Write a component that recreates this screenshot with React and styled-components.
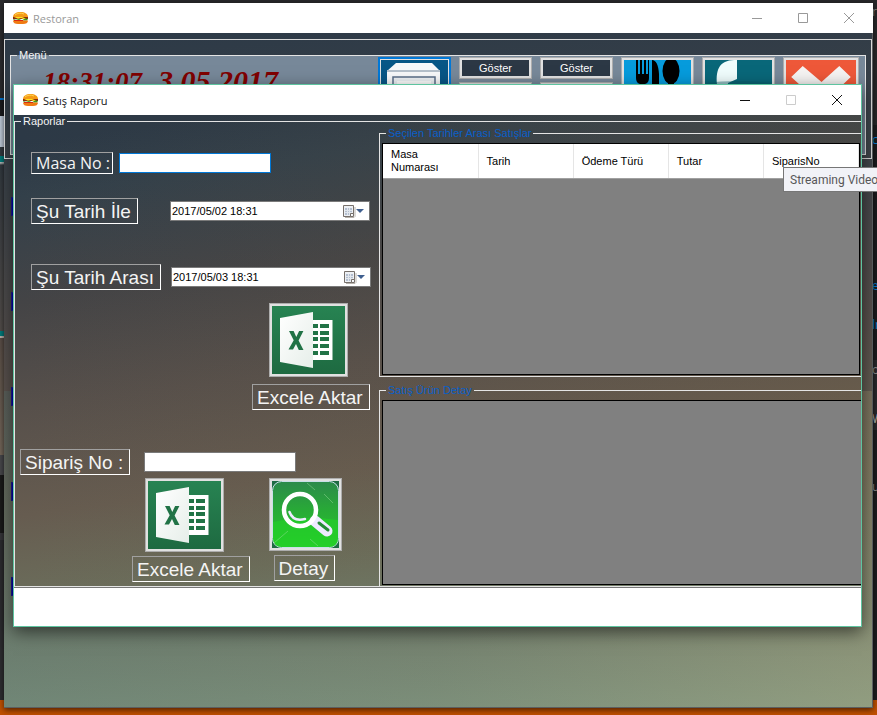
import React from "react";
import styled, { createGlobalStyle, css } from "styled-components";

const Global = createGlobalStyle`
  * { box-sizing: border-box; }
  html, body { margin: 0; padding: 0; }
  body { overflow: hidden; font-family: "Liberation Sans", Arial, sans-serif; font-size: 11px; }
  button, input { font: inherit; }
`;

const uiFont = css`font-family: "Open Sans", "Noto Sans", sans-serif;`;

const Desktop = styled.div`
  position: relative;
  display: grid;
  grid-template-columns: 4px 1fr 5px;
  grid-template-rows: 1fr 15px;
  min-height: 100vh;
  overflow: hidden;
  background: #28282a;
`;

const LeftStrip = styled.div`
  background: linear-gradient(
    #2b2b2d 0 98px, #0078d7 98px 100px, #1c1c1e 100px 116px, #c5d0df 116px 147px,
    #343b42 147px 156px, #008080 156px 162px, #b8bcbc 162px 163px, #343b42 165px,
    #55504d 331px, #008080 331px 336px, #c0b8b0 336px 338px, #5c5049 338px, #776a5c 455px,
    #4a4a4e 455px 475px, #1c1c1c 475px 533px, #38383c 533px 540px, #2d2d30 540px
  );
`;

const RightStrip = styled.div`
  grid-column: 3;
  overflow: hidden;
  background: linear-gradient(#28282a 0 125px, #1c1c1e 125px 360px, #2b2b2e 360px 430px, #1d1d1f 430px);
`;

const StripText = styled.span`
  ${uiFont}
  display: block;
  height: ${(p) => p.$height}px;
  padding-top: 4px;
  font-size: 12px;
  line-height: 16px;
  color: ${(p) => p.$color};
`;

const Taskbar = styled.div`
  grid-column: 1 / -1;
  background: #c05000;
`;

const Window = styled.section`
  position: absolute;
  display: flex;
  flex-direction: column;
`;

const MainWindow = styled(Window)`
  inset: 3px 4px 7px 4px;
  box-shadow: 0 2px 6px rgba(0, 0, 0, 0.6);
  background:
    linear-gradient(90deg, rgba(85, 130, 125, 0.25), rgba(110, 140, 120, 0.1) 50%, rgba(190, 180, 130, 0.25)) bottom / 100% 45% no-repeat,
    linear-gradient(176deg, #2d3a47 5%, #3c4248 25%, #58504c 50%, #6a6555 68%, #747e6c 86%, #829680);
`;

const Dialog = styled(Window)`
  inset: 84px 15px 88px 13px;
  border: 1px solid #5ec4a0;
  background: #fff;
  box-shadow: 0 5px 16px rgba(0, 0, 0, 0.55);
`;

const TitleBar = styled.header`
  ${uiFont}
  display: flex;
  flex: none;
  align-items: center;
  height: 30px;
  padding: 0 17px 0 9px;
  gap: 5px;
  background: #fff;
  color: ${(p) => (p.$active ? "#111" : "#999")};
  font-size: 11px;
`;

const Title = styled.h1`
  flex: 1;
  margin: 0;
  font-size: 11px;
  font-weight: 400;
`;

const Controls = styled.div`
  display: flex;
  gap: 33px;
`;

const ControlButton = styled.button`
  display: flex;
  width: 13px;
  height: 13px;
  padding: 0;
  border: 0;
  background: none;
  color: ${(p) => p.$color};
`;

const MainBody = styled.div`
  display: flex;
  flex: 1;
  flex-direction: column;
  padding-top: 6px;
  border: solid #5c5f61;
  border-width: 0 1px 1px 0;
`;

const MenuFrame = styled.div`
  padding: 9px 5px 3px;
  border: 1px solid #d8d8d8;
`;

const Group = styled.fieldset`
  display: flex;
  min-width: 0;
  margin: 0;
  padding: 0;
  border: 1px solid #e4e4e4;
`;

const MenuGroup = styled(Group)`
  height: 106px;
  background: #778899;
`;

const Legend = styled.legend`
  margin-left: ${(p) => p.$indent}px;
  padding: 0 2px;
  line-height: ${(p) => p.$line}px;
  color: ${(p) => p.$color || "#f4f4f4"};
`;

const Clock = styled.div`
  display: flex;
  flex: 1;
  align-items: baseline;
  gap: 16px;
  padding: 4px 0 0 32px;
  font: italic bold 27px/30px "Liberation Serif", "Times New Roman", serif;
  color: #800000;
  white-space: nowrap;
`;

const DateText = styled.span`
  font-size: 30px;
`;

const Tools = styled.div`
  display: grid;
  grid-template-columns: repeat(5, 73px) 76px;
  gap: 8px;
  padding-right: 6px;
  margin-top: -5px;
`;

const ToolStack = styled.div`
  display: flex;
  flex-direction: column;
  gap: 3px;
`;

const frame = css`
  border: 1px solid #adadad;
  box-shadow: inset 0 0 0 2px #e1e1e1;
`;

const ShowButton = styled.button`
  ${frame}
  height: 22px;
  padding: 0;
  background: #2c3845;
  color: #fff;
`;

const Tile = styled.button`
  ${frame}
  height: 74px;
  padding: 2px;
  border-color: ${(p) => (p.$focus ? "#0078d7" : "#adadad")};
  background: ${(p) => p.$bg};
  svg { display: block; width: 100%; height: 100%; }
  ${(p) => p.$focus && css`box-shadow: inset 0 0 0 1px #0078d7, inset 0 0 0 2px #e1e1e1;`}
`;

const Markers = styled.ul`
  display: flex;
  flex-direction: column;
  gap: 76px;
  margin: 38px 0 0 7px;
  padding: 0;
  list-style: none;
`;

const Marker = styled.li`
  width: 4px;
  height: 19px;
  border: 1px solid #1a1a90;
  background: #0000b0;
`;

const ReportBody = styled.div`
  display: flex;
  flex: 1;
  min-height: 0;
  border-bottom: 1px solid #777;
  background:
    linear-gradient(90deg, rgba(60, 70, 75, 0), rgba(110, 90, 60, 0.2)),
    linear-gradient(172deg, #2c3946 5%, #33404a 14%, #444446 32%, #57504b 50%, #665c50 68%, #6b6d5b 82%, #70806d 95%);
`;

const ReportGroup = styled(Group)`
  flex: 1;
  border-right: 0;
`;

const Columns = styled.div`
  display: grid;
  flex: 1;
  grid-template-columns: 364px minmax(0, 1fr);
`;

const Form = styled.form`
  padding: 23px 0 0 5px;
`;

const Row = styled.div`
  display: flex;
  align-items: center;
  height: 26px;
  margin-top: ${(p) => p.$top || 0}px;
  padding-left: ${(p) => (p.$outdent ? 0 : 11)}px;
`;

const Caption = styled.label`
  flex: none;
  height: 26px;
  margin-left: ${(p) => p.$indent || 0}px;
  padding: 0 6px 0 4px;
  border: 1px solid;
  border-color: #a0a0a0 #fff #fff #a0a0a0;
  color: #f4f4f4;
  font-size: 19px;
  line-height: 25px;
  white-space: nowrap;
`;

const SmallCaption = styled(Caption)`
  ${uiFont}
  height: 22px;
  padding: 0 2px 0 4px;
  font-size: 16px;
  line-height: 20px;
`;

const TextBox = styled.input`
  width: 152px;
  height: 20px;
  margin-left: ${(p) => p.$gap}px;
  padding: 0 3px;
  border: 1px solid ${(p) => (p.$focus ? "#0078d7" : "#7a7a7a")};
  outline: 0;
  background: #fff;
`;

const DateBox = styled.div`
  display: flex;
  align-items: center;
  width: 200px;
  height: 20px;
  margin-left: auto;
  margin-right: ${(p) => p.$right}px;
  border: 1px solid #7a7a7a;
  background: #fff;
  input {
    flex: 1;
    min-width: 0;
    padding: 0 1px;
    border: 0;
    outline: 0;
    color: #000;
  }
  button {
    display: flex;
    padding: 0 4px 0 0;
    border: 0;
    background: none;
  }
`;

const Actions = styled.div`
  display: flex;
  gap: ${(p) => p.$gap || 0}px;
  margin-top: ${(p) => p.$top}px;
  padding-left: ${(p) => p.$left}px;
`;

const Action = styled.div`
  display: flex;
  flex-direction: column;
  align-items: flex-start;
  gap: ${(p) => p.$gap}px;
`;

const IconButton = styled.button`
  ${frame}
  width: ${(p) => p.$w}px;
  height: ${(p) => p.$h}px;
  margin-left: ${(p) => p.$indent || 0}px;
  padding: 2px;
  background: #e1e1e1;
  svg { display: block; width: 100%; height: 100%; }
`;

const Results = styled.div`
  display: flex;
  flex-direction: column;
  gap: 7px;
`;

const ResultGroup = styled(Group)`
  flex: ${(p) => p.$grow} 1 0;
  padding: 3px ${(p) => (p.$last ? 0 : 1)}px 1px 2px;
  border-right: 0;
  border-bottom-width: ${(p) => (p.$last ? 0 : 1)}px;
`;

const GridView = styled.div`
  flex: 1;
  min-width: 0;
  border: 1px solid #000;
  border-right-width: ${(p) => (p.$open ? 0 : 1)}px;
  background: #808080;
`;

const Table = styled.table`
  width: 100%;
  border-collapse: collapse;
  table-layout: fixed;
  background: #fff;
  th {
    height: 34px;
    padding: 1px 20px 0 8px;
    border-right: 1px solid #e5e5e5;
    border-bottom: 1px solid #a0a0a0;
    font-weight: 400;
    line-height: 13px;
    text-align: left;
    color: #000;
  }
`;

const Footer = styled.footer`
  flex: none;
  height: 38px;
`;

const Tooltip = styled.div`
  position: absolute;
  top: 167px;
  right: -12px;
  width: 106px;
  height: 25px;
  padding-left: 6px;
  border: 1px solid #767676;
  background: #f1f2f7;
  color: #575757;
  font-family: Roboto, sans-serif;
  font-size: 12px;
  line-height: 24px;
  white-space: nowrap;
`;

const Burger = () => (
  <svg width="15" height="12" viewBox="0 0 15 12" aria-hidden="true">
    <path d="M0 5C0 2 3 0 7.5 0S15 2 15 5z" fill="#f49a16" />
    <path d="M2 3C4 1 8 .6 11 2" stroke="#ffd44d" strokeWidth="1" fill="none" />
    <path d="M0 5h15v2H0z" fill="#8b2d0b" />
    <path d="M1 5h8l4 1.500-2 .8-3-1.300-3 .8z" fill="#ffe21f" />
    <path d="M0 7l3 .8L6 7l3 1.200L12 6.500l3 .3-1 1.700H1z" fill="#3f9a1f" />
    <path d="M0 8.500h15C15 11 13 12 10 12H5C2 12 0 11 0 8.500z" fill="#f07a12" />
    <path d="M1 8.500h9" stroke="#d92b12" strokeWidth="1" />
  </svg>
);

const Line = ({ children }) => (
  <svg width="13" height="13" viewBox="0 0 13 13" fill="none" stroke="currentColor" aria-hidden="true">{children}</svg>
);

const WindowControls = ({ color, maxColor }) => (
  <Controls>
    <ControlButton type="button" aria-label="Simge durumuna küçült" $color={color}><Line><path d="M1 6.500h10" /></Line></ControlButton>
    <ControlButton type="button" aria-label="Ekranı kapla" $color={maxColor}><Line><path d="M1.500 1.500h9v9h-9z" /></Line></ControlButton>
    <ControlButton type="button" aria-label="Kapat" $color={color}><Line><path d="M1 1l10 10M11 1L1 11" /></Line></ControlButton>
  </Controls>
);

const ExcelIcon = ({ id }) => (
  <svg viewBox="0 0 73 68" preserveAspectRatio="none" aria-hidden="true">
    <defs>
      <linearGradient id={`${id}g`} x1="0" y1="0" x2="0" y2="1"><stop stopColor="#278352" /><stop offset="1" stopColor="#1e6a41" /></linearGradient>
      <linearGradient id={`${id}p`} x1="0" y1="0" x2="1" y2="1"><stop stopColor="#fff" /><stop offset="1" stopColor="#e6eee9" /></linearGradient>
    </defs>
    <path d="M0 0h73v68H0z" fill={`url(#${id}g)`} />
    <path d="M40 14h20.500v40H40z" fill="#fff" />
    <path d="M40 18h6v4h-6zM48 18h9v4h-9zM40 25h6v4h-6zM48 25h9v4h-9zM40 31h6v4h-6zM48 31h9v4h-9zM40 38h6v4h-6zM48 38h9v4h-9zM40 45h6v4h-6zM48 45h9v4h-9z" fill="#217346" />
    <path d="M8 12L41 6v56L8 56z" fill={`url(#${id}p)`} />
    <path d="M17 25h4.600l2.700 6 2.800-6h4.300l-4.800 9.500L31.500 44h-4.700L24 38l-3 5.500h-4.500l5.200-9.200z" fill="#217346" />
  </svg>
);

const SearchIcon = () => (
  <svg viewBox="0 0 67 67" aria-hidden="true">
    <defs><linearGradient id="lens" x1="0" y1="0" x2="0" y2="1"><stop stopColor="#2c8a4b" /><stop offset=".45" stopColor="#28ab36" /><stop offset="1" stopColor="#2ac92c" /></linearGradient></defs>
    <path d="M0 0h67v67H0z" fill="#1f6b43" />
    <rect x=".5" y=".5" width="66" height="66" rx="9" fill="url(#lens)" stroke="#c9dfe8" strokeWidth="1" />
    <path d="M1 41Q34 34 66 39v18q0 9-9 9H10q-9 0-9-9z" fill="#21d326" opacity=".6" />
    <path d="M2 62L16 50M35 2l8 7M52 13l9 9M38 58l8 7" stroke="#9de09d" opacity=".45" />
    <path d="M43 40L55 50" stroke="#eeeaff" strokeWidth="11" strokeLinecap="round" />
    <path d="M47 42l9 7" stroke="#248a35" strokeWidth="3" strokeLinecap="round" />
    <circle cx="28" cy="29" r="16" fill="none" stroke="#fff" strokeWidth="4.500" />
    <path d="M17.500 31Q21 41 33 38" fill="none" stroke="#eeeaff" strokeWidth="2.500" strokeLinecap="round" />
  </svg>
);

const CalendarIcon = () => (
  <svg width="22" height="13" viewBox="0 0 22 13" aria-hidden="true">
    <path d="M2 12.500h9l1-1V2" fill="none" stroke="#b8b4ae" />
    <path d="M.5.5h10v11H.5z" fill="#edf0f4" stroke="#76706b" />
    <path d="M2 3h7v7H2z" fill="#b4bfd0" />
    <path d="M2 5.500h7M2 7.500h7M4.500 3v7M6.500 3v7" stroke="#edf0f4" opacity=".8" />
    <path d="M7.500 11.500v-3h3" fill="#fff" stroke="#76706b" />
    <path d="M13 4h8l-4 4z" fill="#3f5f8f" />
  </svg>
);

const RegisterIcon = () => (
  <svg viewBox="0 0 67 68" preserveAspectRatio="none" aria-hidden="true">
    <path d="M15 3h36l8 8v57H6V11z" fill="#f7f8fa" />
    <path d="M6 11h53" stroke="#b4bfca" strokeWidth="2" />
    <path d="M12 68V17h42v51" fill="#edf1f5" stroke="#5a6e88" strokeWidth="1.500" />
    <path d="M16 21h34v40H16z" fill="#fff" />
  </svg>
);

const CutleryIcon = () => (
  <svg viewBox="0 0 67 68" preserveAspectRatio="none" aria-hidden="true">
    <path d="M12 0h2v14h2V0h2v14h2V0h2v14h2V0h1v18q0 5-4 6v44h-5V24q-4-1-4-6z" />
    <path d="M28 0q6 0 7 14v12l1 42h-8z" />
    <ellipse cx="47" cy="11" rx="8.500" ry="13" />
    <path d="M44 22h6v46h-6z" />
  </svg>
);

const PieIcon = () => (
  <svg viewBox="0 0 67 68" preserveAspectRatio="none" aria-hidden="true">
    <path d="M32 0v19l-9 4-2 20C11 35 9 14 15 6 19 1 24 0 32 0z" fill="#effcfc" />
    <path d="M0 23q32-4 67 0v45H0z" fill="#095d6a" opacity=".4" />
  </svg>
);

const CrossIcon = () => (
  <svg viewBox="0 0 67 68" preserveAspectRatio="none" aria-hidden="true">
    <path d="M16 6l18 16L51 6l11 11-17 17 17 17-11 11-17-17-18 17L5 51l18-17L5 17z" fill="#f5f3f2" />
  </svg>
);

const stripTexts = [
  ["r", 128, "#888"], ["c", 146, "#0a84e0"], ["e", 39, "#0a84e0"], ["lr", 45, "#0a84e0"],
  ["o", 49, "#999"], ["W", 68, "#bbb"], ["u", 176, "#999"],
];

const dates = [
  { id: "from", label: "Şu Tarih İle", value: "2017/05/02 18:31", top: 22, right: 9 },
  { id: "to", label: "Şu Tarih Arası", value: "2017/05/03 18:31", top: 40, right: 8 },
];

export default function App() {
  return (
    <Desktop>
      <Global />
      <LeftStrip />
      <RightStrip>
        {stripTexts.map(([text, height, color]) => (
          <StripText key={text} $height={height} $color={color}>{text}</StripText>
        ))}
      </RightStrip>
      <Taskbar />

      <MainWindow aria-label="Restoran">
        <TitleBar>
          <Burger />
          <Title as="h2">Restoran</Title>
          <WindowControls color="#999" maxColor="#999" />
        </TitleBar>
        <MainBody>
          <MenuFrame>
            <MenuGroup>
              <Legend $indent={6} $line={13}>Menü</Legend>
              <Clock><span>18:31:07</span><DateText>3.05.2017</DateText></Clock>
              <Tools>
                <Tile type="button" aria-label="Kasa" $bg="#075686" $focus><RegisterIcon /></Tile>
                {[1, 2].map((n) => (
                  <ToolStack key={n}>
                    <ShowButton type="button">Göster</ShowButton>
                    <ShowButton type="button" aria-label="Gizle" />
                  </ToolStack>
                ))}
                <Tile type="button" aria-label="Menü" $bg="#069bdc"><CutleryIcon /></Tile>
                <Tile type="button" aria-label="Rapor" $bg="#096779"><PieIcon /></Tile>
                <Tile type="button" aria-label="Çıkış" $bg="#ee5839"><CrossIcon /></Tile>
              </Tools>
            </MenuGroup>
          </MenuFrame>
          <Markers>{[1, 2, 3, 4, 5].map((n) => <Marker key={n} />)}</Markers>
        </MainBody>
      </MainWindow>

      <Dialog role="dialog" aria-label="Satış Raporu">
        <TitleBar $active>
          <Burger />
          <Title>Satış Raporu</Title>
          <WindowControls color="#111" maxColor="#ccc" />
        </TitleBar>
        <ReportBody>
          <ReportGroup>
            <Legend $indent={6} $line={12}>Raporlar</Legend>
            <Columns>
              <Form onSubmit={(e) => e.preventDefault()}>
                <Row>
                  <SmallCaption htmlFor="table-no">Masa No :</SmallCaption>
                  <TextBox id="table-no" $gap={6} $focus />
                </Row>
                {dates.map((d) => (
                  <Row key={d.id} $top={d.top}>
                    <Caption htmlFor={d.id}>{d.label}</Caption>
                    <DateBox $right={d.right}>
                      <input id={d.id} type="text" defaultValue={d.value} />
                      <button type="button" aria-label="Takvim"><CalendarIcon /></button>
                    </DateBox>
                  </Row>
                ))}
                <Actions $top={13} $left={232}>
                  <Action $gap={7}>
                    <IconButton id="export-sales" type="button" $w={79} $h={74} $indent={17}><ExcelIcon id="a" /></IconButton>
                    <Caption htmlFor="export-sales">Excele Aktar</Caption>
                  </Action>
                </Actions>
                <Row $top={39} $outdent>
                  <Caption htmlFor="order-no">Sipariş No :</Caption>
                  <TextBox id="order-no" $gap={14} />
                </Row>
                <Actions $top={3} $left={112} $gap={19}>
                  <Action $gap={4}>
                    <IconButton id="export-order" type="button" $w={79} $h={74} $indent={13}><ExcelIcon id="b" /></IconButton>
                    <Caption htmlFor="export-order">Excele Aktar</Caption>
                  </Action>
                  <Action $gap={4}>
                    <IconButton id="detail" type="button" $w={73} $h={73}><SearchIcon /></IconButton>
                    <Caption htmlFor="detail" $indent={5}>Detay</Caption>
                  </Action>
                </Actions>
              </Form>
              <Results>
                <ResultGroup $grow={250}>
                  <Legend $indent={4} $line={13} $color="#0a5fc8">Seçilen Tarihler Arası Satışlar</Legend>
                  <GridView>
                    <Table>
                      <thead>
                        <tr>
                          {["Masa Numarası", "Tarih", "Ödeme Türü", "Tutar", "SiparisNo"].map((h) => <th key={h} scope="col">{h}</th>)}
                        </tr>
                      </thead>
                    </Table>
                  </GridView>
                </ResultGroup>
                <ResultGroup $grow={202} $last>
                  <Legend $indent={4} $line={13} $color="#0a5fc8">Satış Ürün Detay</Legend>
                  <GridView $open />
                </ResultGroup>
              </Results>
            </Columns>
          </ReportGroup>
        </ReportBody>
        <Footer />
      </Dialog>

      <Tooltip role="tooltip">Streaming Video</Tooltip>
    </Desktop>
  );
}
